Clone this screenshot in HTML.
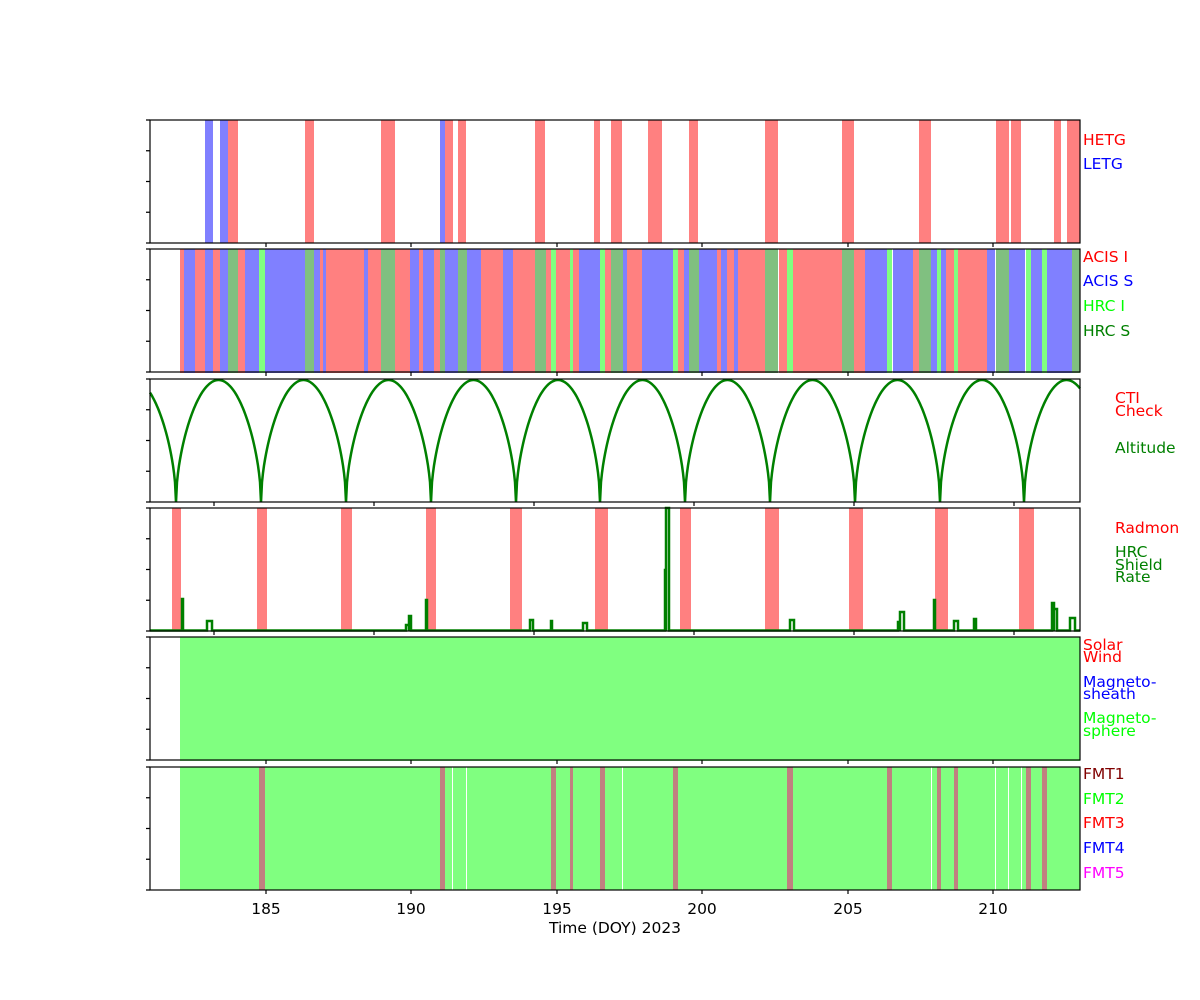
<!DOCTYPE html>
<html><head><meta charset="utf-8"><style>
html,body{margin:0;padding:0;background:#fff}
svg{display:block}
text{font-family:"DejaVu Sans","Liberation Sans",sans-serif;font-size:15.5px}
</style></head><body>
<svg id="s" width="1200" height="1000" xmlns="http://www.w3.org/2000/svg">
<rect width="1200" height="1000" fill="#fff"/>
<g id="bars"></g>
<path id="alt" d="" fill="none" stroke="#008000" stroke-width="2.5"/>
<path id="hrc" d="" fill="none" stroke="#008000" stroke-width="2.5"/>
<g id="axes" fill="none" stroke="#000" stroke-width="1.2"></g>
<g id="lab"></g>
<text x="266" y="914" text-anchor="middle">185</text>
<text x="411" y="914" text-anchor="middle">190</text>
<text x="557" y="914" text-anchor="middle">195</text>
<text x="702" y="914" text-anchor="middle">200</text>
<text x="848" y="914" text-anchor="middle">205</text>
<text x="993" y="914" text-anchor="middle">210</text>
<text x="615" y="933" text-anchor="middle">Time (DOY) 2023</text>
<text x="1083" y="145" fill="#ff0000">HETG</text>
<text x="1083" y="169" fill="#0000ff">LETG</text>
<text x="1083" y="262" fill="#ff0000">ACIS I</text>
<text x="1083" y="286" fill="#0000ff">ACIS S</text>
<text x="1083" y="311" fill="#00ff00">HRC I</text>
<text x="1083" y="336" fill="#008000">HRC S</text>
<text x="1115" y="403" fill="#ff0000">CTI</text>
<text x="1115" y="416" fill="#ff0000">Check</text>
<text x="1115" y="453" fill="#008000">Altitude</text>
<text x="1115" y="533" fill="#ff0000">Radmon</text>
<text x="1115" y="557" fill="#008000">HRC</text>
<text x="1115" y="570" fill="#008000">Shield</text>
<text x="1115" y="582" fill="#008000">Rate</text>
<text x="1083" y="650" fill="#ff0000">Solar</text>
<text x="1083" y="662" fill="#ff0000">Wind</text>
<text x="1083" y="687" fill="#0000ff">Magneto-</text>
<text x="1083" y="699" fill="#0000ff">sheath</text>
<text x="1083" y="723" fill="#00ff00">Magneto-</text>
<text x="1083" y="736" fill="#00ff00">sphere</text>
<text x="1083" y="779" fill="#800000">FMT1</text>
<text x="1083" y="804" fill="#00ff00">FMT2</text>
<text x="1083" y="828" fill="#ff0000">FMT3</text>
<text x="1083" y="853" fill="#0000ff">FMT4</text>
<text x="1083" y="878" fill="#ff00ff">FMT5</text>
</svg>
<script>
var NS="http://www.w3.org/2000/svg",bars=document.getElementById('bars'),axes=document.getElementById('axes');
function r(x1,x2,y,h,c){var e=document.createElementNS(NS,'rect');e.setAttribute('x',x1);e.setAttribute('y',y);e.setAttribute('width',x2-x1);e.setAttribute('height',h);e.setAttribute('fill',c);bars.appendChild(e);}
var R='#ff8080',B='#8080ff',G='#80c080',L='#80ff80',W='#fff',M='#c08080';
[[205,213,B],[220,228,B],[228,238,R],[305,314,R],[381,395,R],[440,445,B],[445,453,R],[458,466,R],[535,545,R],[594,600,R],[611,622,R],[648,662,R],[689,698,R],[765,778,R],[842,854,R],[919,931,R],[996,1009,R],[1011,1021,R],[1054,1061,R],[1067,1080,R]].forEach(function(a){r(a[0],a[1],120,123,a[2]);});
[[180,184,R],[184,195,B],[195,205,R],[205,213,B],[213,220,R],[220,228,B],[228,238,G],[238,245,R],[245,259,B],[259,265,L],[265,305,B],[305,314,G],[314,320,B],[320,323,R],[323,326,B],[326,364,R],[364,368,B],[368,381,R],[381,395,G],[395,410,R],[410,419,B],[419,423,R],[423,434,B],[434,440,R],[440,445,G],[445,458,B],[458,467,G],[467,481,B],[481,503,R],[503,513,B],[513,535,R],[535,546,G],[546,551,R],[551,556,L],[556,570,R],[570,573,L],[573,579,R],[579,600,B],[600,605,L],[605,611,R],[611,623,G],[623,627,B],[627,642,R],[642,673,B],[673,678,L],[678,684,R],[684,689,B],[689,699,G],[699,717,B],[717,721,R],[721,727,B],[727,734,R],[734,738,B],[738,765,R],[765,778,G],[779,787,R],[787,793,L],[793,842,R],[842,854,G],[854,865,R],[865,887,B],[887,892,L],[893,913,B],[913,919,R],[919,931,G],[931,937,B],[937,941,L],[941,946,B],[946,954,R],[954,958,L],[958,987,R],[987,995,B],[996,1009,G],[1009,1025,B],[1026,1031,L],[1031,1042,B],[1042,1047,L],[1047,1072,B],[1072,1080,G]].forEach(function(a){r(a[0],a[1],249,124,a[2]);});
[[172,181],[257,267],[341,352],[426,436],[510,522],[595,608],[680,691],[765,779],[849,863],[935,948],[1019,1034]].forEach(function(a){r(a[0],a[1],508,123,R);});
r(180,1080,637,124,L);
r(180,1080,767,123,L);
[[259,265],[440,445],[551,556],[570,573],[600,605],[673,678],[787,793],[887,892],[937,941],[954,958],[1026,1031],[1042,1047]].forEach(function(a){r(a[0],a[1],767,123,M);});
[452,466,622,931,995,1008,1021].forEach(function(x){r(x,x+1,767,123,W);});
var mins=[91,176,261,346,431,516,600,685,770,855,940,1024,1109],d='';
for(var i=0;i<mins.length-1;i++){var a=mins[i],b=mins[i+1];for(var x=a;x<=b;x+=1){if(x<150||x>1080)continue;var t=(x-a)/(b-a);var y=502-122*Math.pow(Math.sin(Math.PI*t),0.55);d+=(d?'L':'M')+x.toFixed(1)+','+y.toFixed(1);}}
document.getElementById('alt').setAttribute('d',d);
var sp=[[182,183,599],[207,212,621],[406,409,625],[409,411,616],[426,427,600],[530,533,620],[551,552,621],[583,587,623],[665,666,570],[666,669,508],[790,794,620],[898,900,622],[900,904,612],[934,935,600],[954,958,621],[974,976,619],[1052,1054,603],[1054,1057,609],[1070,1075,618]];
var h='M150,630.5';sp.forEach(function(s){h+='L'+s[0]+',630.5L'+s[0]+','+s[2]+'L'+s[1]+','+s[2]+'L'+s[1]+',630.5';});h+='L1080,630.5';
document.getElementById('hrc').setAttribute('d',h);
var panels=[120,249,379,508,637,767],xt=[266,411,557,702,848,993],xt2=[214,374,534,694,854,1014];
panels.forEach(function(y,i){var e=document.createElementNS(NS,'rect');e.setAttribute('x',150);e.setAttribute('y',y);e.setAttribute('width',930);e.setAttribute('height',123);axes.appendChild(e);
var p='';for(var k=0;k<5;k++){var yy=y+k*30.75;p+='M146,'+yy+'L150,'+yy;}
var ticks=(i==2||i==3)?xt2:xt;ticks.forEach(function(x){p+='M'+x+','+(y+123)+'L'+x+','+(y+127);});
var q=document.createElementNS(NS,'path');q.setAttribute('d',p);axes.appendChild(q);});
</script>
</body></html>
